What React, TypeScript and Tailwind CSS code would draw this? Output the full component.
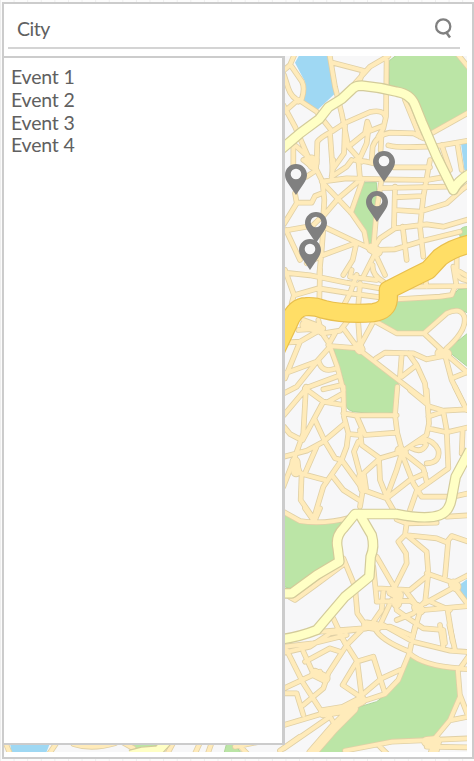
import React from "react";

type Tile = { x: number; y: number; roads: string[]; wide?: string[] };

// Street geometry, drawn at three units per pixel, one sheet per district.
const tiles: Tile[] = [
  {
    x: 280,
    y: 50,
    roads: [
      "M45 10 L30 45 L10 62",
      "M35 50 L66 95 Q76 115 65 148 L55 155",
      "M12 75 L25 115 Q35 145 60 152 L110 185 L155 242",
      "M10 188 L45 157",
      "M10 165 L45 230 L95 345",
      "M148 10 L165 110 L185 190 L205 290 L245 335",
      "M158 38 L250 62 L238 95",
      "M325 18 L270 50 L225 100",
      "M320 10 L318 200 L310 235 L295 260",
      "M188 222 L270 186 Q310 178 316 200",
      "M110 340 L112 275 Q120 262 160 242 L190 222",
      "M150 250 L158 360",
      "M195 225 L192 310 L160 355",
      "M205 290 L255 250 L262 215 L272 242 L308 228",
      "M265 240 L260 280 L235 335",
      "M275 330 L278 290 Q290 255 330 248 L400 250 L430 265",
      "M305 245 L302 300 M325 286 Q350 294 440 290",
      "M375 150 L420 260",
      "M440 258 L565 188",
      "M450 292 L565 272",
      "M485 285 L510 360",
      "M532 280 L545 360",
      "M565 52 L535 15",
      "M40 290 L40 345 M48 288 L100 335",
    ],
    wide: ["M95 330 L98 345"],
  },
  {
    x: 280,
    y: 160,
    roads: [
      "M70 0 L110 30 L130 70 L215 160 L253 215 L262 262",
      "M110 0 L108 32 M110 30 L80 50",
      "M45 100 L50 128 L95 128 L105 108 L125 100",
      "M50 130 L12 192",
      "M128 70 L133 120 L130 165 L90 205",
      "M240 60 L175 115 L130 168",
      "M125 65 L200 55 L310 58 L440 60 L500 50",
      "M160 0 L155 55 M155 50 L200 20 L215 0",
      "M235 0 L240 55",
      "M247 62 L213 158",
      "M225 0 L260 5 L280 10",
      "M340 22 L450 22 M310 84 L500 80",
      "M345 80 L342 200",
      "M304 62 L290 150 L280 265",
      "M345 112 L430 108",
      "M345 150 L420 155 L500 130 L545 90 L565 75",
      "M450 0 L430 110 L420 200 L430 290",
      "M345 205 L300 235 L280 265",
      "M345 205 L440 193 L490 200 L565 178",
      "M430 242 L540 215",
      "M368 200 L380 300",
      "M280 270 L345 268 L430 242",
      "M12 212 L80 200",
      "M18 210 L60 300",
      "M130 200 L215 240 L280 270 L315 345",
      "M130 205 L125 270 L118 340",
      "M80 310 L130 285 L225 250",
      "M228 255 L218 300 L190 345",
      "M288 275 L250 350",
      "M500 280 L535 250 M530 260 L530 330 L565 350",
    ],
    wide: ["M85 0 L100 15", "M275 265 L292 275"],
  },
  {
    x: 280,
    y: 270,
    roads: [
      "M15 0 L42 75 L35 100",
      "M15 8 L90 16 L200 38 L300 55",
      "M120 0 L118 90",
      "M45 75 L115 55 L210 70 L300 82",
      "M215 0 L210 20 L290 30",
      "M230 15 L210 70 L192 105",
      "M240 40 L235 105",
      "M278 -15 Q275 15 310 35",
      "M350 88 L480 80 L515 75 L525 50",
      "M360 50 L560 48",
      "M430 0 L440 50 M520 -10 L530 50 M525 0 Q535 30 565 32",
      "M70 150 L110 165 L150 225",
      "M55 180 L130 175 M115 150 L125 190",
      "M130 190 L180 182 L205 150",
      "M150 228 L235 235",
      "M190 175 L230 230 M235 160 L240 230 M280 155 L238 232",
      "M165 190 L145 225",
      "M288 155 L350 190 L432 190 L490 245 L565 310",
      "M432 190 L500 130 Q540 110 553 140 Q562 180 500 235 L490 250",
      "M232 235 L355 330 L440 395",
      "M288 265 L315 248 L400 250 L440 268 L490 258",
      "M365 255 L360 320",
      "M385 250 L410 285 L365 320 M410 285 L435 340 L440 390",
      "M495 255 L515 330 L550 400",
      "M515 325 L565 305",
      "M12 218 L60 215 L120 180",
      "M60 215 L15 325",
      "M150 230 L110 275 L15 310",
      "M110 275 L50 350 L12 370",
      "M150 230 L172 290 L190 360",
      "M115 270 Q125 312 168 295",
      "M75 355 L175 318",
    ],
    wide: ["M75 165 L120 178", "M235 230 L240 238", "M480 250 L500 252"],
  },
  {
    x: 280,
    y: 390,
    roads: [
      "M12 75 L75 0",
      "M78 -10 L70 130 L45 200 L10 290",
      "M12 110 L30 132 L60 148",
      "M75 -5 L130 35 L190 45",
      "M130 35 L68 150",
      "M105 90 L135 155 L165 205 L185 210",
      "M145 35 L190 10 M130 -2 L185 -15",
      "M190 -10 L192 80 L205 130 L200 170 L185 210 L130 290 L100 390",
      "M195 100 L130 155 L80 182 L12 200",
      "M110 170 L75 250",
      "M45 205 L60 250 L135 270",
      "M65 250 L62 330 L100 385",
      "M190 70 L225 76 L350 76",
      "M230 78 L255 135 L348 128 M205 132 L240 135",
      "M352 -10 L345 75 L352 130 L367 185",
      "M240 120 L245 165 L300 205 L367 185 L440 135 L447 100 L440 0",
      "M235 155 L222 185 L250 290 L240 350",
      "M185 210 L250 300 L320 325 L340 360",
      "M155 255 L190 300 L240 332",
      "M300 205 L245 255 M297 205 L300 270 L320 320",
      "M365 190 L350 240 L320 320",
      "M365 190 L400 280 L425 320 L520 320 L565 310",
      "M320 325 L390 270 L435 250",
      "M367 185 L430 235 L440 275",
      "M395 175 Q425 190 438 165 Q435 150 405 160 M430 148 Q460 150 475 180 Q482 218 440 220",
      "M390 0 L450 50 L490 62 L560 58",
      "M445 80 L490 65 L500 120 L505 235 L410 303 L390 360",
      "M445 115 L500 127 L565 112",
      "M525 -10 L560 60",
      "M548 120 L545 190",
    ],
    wide: ["M45 215 L48 245", "M245 260 L250 295", "M360 182 L370 188"],
  },
  {
    x: 280,
    y: 510,
    roads: [
      "M10 5 L60 33 Q130 45 215 22",
      "M75 -5 L100 30 M120 -5 L105 30",
      "M190 145 L225 230 L232 310 L260 350",
      "M30 262 L45 270 L100 230 L195 160",
      "M350 28 L380 40 L470 38 M500 20 L565 16",
      "M380 40 L375 75 L355 95 L378 130 L380 160 L345 230",
      "M380 75 L440 125 L445 190 L435 280",
      "M375 75 L470 85 L500 97 L515 78 L565 95",
      "M505 90 L495 200",
      "M440 190 L520 218 L565 195",
      "M290 140 L345 235 M280 170 L290 270",
      "M290 235 L390 240 L445 195",
      "M515 220 L565 285 M525 230 L435 280",
      "M290 275 L390 272 L430 300 L565 288",
      "M310 245 L305 300 L270 350",
      "M335 270 L300 345 M345 240 L350 300 L385 325 L430 355 L490 360 L495 400",
      "M350 330 L400 310 L440 270 L510 300",
      "M420 305 L395 390",
      "M502 295 L518 395",
      "M375 240 L420 300",
      "M120 365 L250 355 L330 350 L390 375",
      "M160 325 L195 400",
    ],
    wide: ["M335 245 L355 255 L350 280", "M260 345 L290 350", "M520 222 L528 230", "M410 292 L420 300"],
  },
  {
    x: 280,
    y: 630,
    roads: [
      "M12 68 L90 50 L150 10 L260 -5",
      "M20 60 L70 160 L125 245",
      "M70 65 L95 120 L130 150",
      "M12 175 L120 125",
      "M75 95 L150 55 L180 65 M12 50 L100 40 L200 15",
      "M170 0 L200 45 L232 95 L245 200",
      "M250 -5 L200 45 L145 130 L130 175 L70 225",
      "M230 95 L188 165 L240 200",
      "M230 95 L280 80 L315 190",
      "M240 200 L305 145 L360 120",
      "M12 190 L50 190 L70 255",
      "M285 -5 Q300 30 388 65",
      "M405 -10 L388 70 L355 150 L315 192 L245 215",
      "M310 -15 L400 35 L510 62 L565 66",
      "M388 70 Q430 108 540 115 L565 80",
      "M480 -15 L490 50 M508 -15 L525 60",
      "M533 115 L540 200 L510 270 L460 330",
      "M540 195 L565 260 L515 270",
      "M12 355 L150 260 L165 285 L195 250",
      "M12 285 L130 250",
      "M195 362 L335 335 L565 325",
      "M440 350 L565 352 M300 350 L320 370 M530 115 L565 118",
    ],
    wide: ["M130 248 L190 238 L245 210", "M220 235 L160 295 L95 370", "M440 335 L470 332 L460 370", "M105 130 L135 145"],
  },
  {
    x: 0,
    y: 730,
    roads: [
      "M15 35 L32 75 M145 75 L170 38 M220 42 Q275 60 345 40",
      "M500 75 L520 38 M583 75 L600 38 M622 75 L635 38",
      "M365 35 L400 55 M705 50 L780 35 M710 38 L745 75 M840 62 L900 20",
    ],
  },
];

const greens = [
  { x: 280, y: 50, d: "M328 32 L350 15 L535 15 L565 50 L565 185 L450 250 L420 180 L395 130 L328 112Z" },
  { x: 280, y: 160, d: "M250 68 L290 68 L288 150 L278 262 L258 262 L252 215 L218 165Z M538 212 Q548 198 565 200 L565 235 L540 230Z" },
  { x: 280, y: 270, d: "M290 155 L350 92 L515 82 L535 58 L565 55 L565 130 L540 118 L510 118 L430 190 L350 190Z M160 235 L230 235 L355 335 L345 428 Q300 435 220 425 Q198 420 197 400 L190 330Z M565 188 L500 240 L565 292Z" },
  { x: 280, y: 510, d: "M12 8 L60 35 L190 38 L165 80 L165 130 L180 150 L100 195 L30 235 L12 230Z M85 230 L110 210 L100 235Z" },
  { x: 280, y: 630, d: "M388 72 Q430 110 530 122 L535 200 L510 260 L460 325 L335 332 L200 358 L180 370 L115 370 L120 345 L240 230 L290 215 Q340 180 360 140Z" },
  { x: 0, y: 730, d: "M380 40 L475 40 L450 58 L395 55Z M680 40 L700 40 L725 70 L672 70Z" },
];

const waters = [
  { x: 280, y: 50, d: "M58 15 L148 15 L160 80 L166 130 L110 182 L68 150 L78 120 L75 95 L45 38Z M543 280 L565 276 L565 365 L553 360Z" },
  { x: 280, y: 510, d: "M538 225 L565 205 L565 277 L545 260Z" },
  { x: 0, y: 730, d: "M30 40 L150 40 L138 70 L35 70Z" },
];

const yellowRoads = [
  { x: 280, y: 50, d: "M5 297 L60 250 L118 207 L145 172 L185 147 L220 114 Q228 107 245 107 Q300 112 350 125 Q392 132 405 165 L425 215 L470 320 L520 420 Q535 390 575 368" },
  { x: 280, y: 510, d: "M5 250 L35 250 L110 195 L178 155 L173 115 Q165 80 190 55 L225 12 L350 12 Q440 30 480 15 Q508 5 515 -35 L527 -100 L570 -180" },
  { x: 280, y: 510, d: "M240 15 L275 75 Q285 110 272 140 L268 200 L195 260 L110 360 Q60 380 5 388" },
  { x: 0, y: 730, d: "M390 75 L425 66 L475 62 L500 35" },
];

const highway =
  "M-15 245 L25 160 Q45 110 78 110 Q105 108 130 118 Q200 135 280 128 Q322 122 325 88 L325 60 L400 22 L445 0 L480 -38 Q520 -68 580 -80";

const pins = [
  { left: 285, top: 164 },
  { left: 373, top: 151 },
  { left: 366, top: 191 },
  { left: 305, top: 212 },
  { left: 298.5, top: 238.5 },
];

function place(p: { x: number; y: number }) {
  return `translate(${p.x} ${p.y}) scale(0.33333)`;
}

function Streets({ color, width, wideWidth }: { color: string; width: number; wideWidth: number }) {
  return (
    <g fill="none" stroke={color} strokeLinejoin="round" strokeLinecap="round">
      {tiles.map((t, i) => (
        <g key={i} transform={place(t)}>
          <path d={t.roads.join(" ")} strokeWidth={width} />
          <path d={(t.wide ?? []).join(" ")} strokeWidth={wideWidth} />
        </g>
      ))}
    </g>
  );
}

function CityMap() {
  return (
    <svg className="block h-[696px] w-[463px]" viewBox="4 56 463 696" aria-hidden="true">
      <rect x="4" y="56" width="463" height="696" fill="#f7f7f8" />
      {greens.map((g, i) => (
        <path key={i} transform={place(g)} d={g.d} fill="#bbe5a6" stroke="#aed59a" strokeWidth="3" />
      ))}
      {waters.map((w, i) => (
        <path key={i} transform={place(w)} d={w.d} fill="#9fd8f3" />
      ))}
      <Streets color="#e0d0a6" width={17} wideWidth={33} />
      <Streets color="#ffebba" width={12} wideWidth={28} />
      <g fill="none" strokeLinejoin="round">
        {yellowRoads.map((r, i) => (
          <path key={i} transform={place(r)} d={r.d} stroke="#d3cb9a" strokeWidth="32" />
        ))}
        {yellowRoads.map((r, i) => (
          <path key={i} transform={place(r)} d={r.d} stroke="#ffffc5" strokeWidth="25" />
        ))}
        <g transform="translate(280 270) scale(0.33333)">
          <path d={highway} stroke="#e8bf4d" strokeWidth="58" />
          <path d={highway} stroke="#ffde66" strokeWidth="51" />
        </g>
      </g>
    </svg>
  );
}

function Pin({ left, top }: { left: number; top: number }) {
  return (
    <svg className="absolute h-[31px] w-[22px]" style={{ left, top }} viewBox="0 0 22 31">
      <path
        fill="#808080"
        fillRule="evenodd"
        d="M11 0C4.9 0 0 4.9 0 11c0 3.1 1.5 5.8 3.2 8.5L11 31l7.8-11.5C20.500 16.800 22 14.100 22 11 22 4.900 17.100 0 11 0Zm0 4.700a5.300 5.300 0 1 1 0 10.600 5.300 5.300 0 0 1 0-10.600Z"
      />
    </svg>
  );
}

const events = ["Event 1", "Event 2", "Event 3", "Event 4"];

export default function App() {
  return (
    <div className="relative h-[761px] w-[474px] overflow-hidden bg-[#fcfcfc] bg-[linear-gradient(90deg,#eeeeee_1px,transparent_1px)] bg-[length:13.6px_13.6px] pt-[2px] pl-[2px] font-['Lato',sans-serif] text-[#606060]">
      <main className="flex h-[757px] w-[472px] flex-col border-2 border-[#cccccc] bg-white">
        <header className="ml-1 flex h-[45px] w-[452px] items-center justify-between border-b-2 border-[#d4d4d4] pr-[7px] pl-[9px]">
          <span className="pt-[7px] text-[19.5px] leading-6 tracking-[-0.5px]">City</span>
          <svg className="mt-[5.5px] h-[22px] w-[20px]" viewBox="0 0 20 22" fill="none" stroke="#808080">
            <circle cx="10.200" cy="9.400" r="7.100" strokeWidth="2.300" />
            <path d="M12.800 14.800 L17 20.500" strokeWidth="2.500" />
          </svg>
        </header>
        <div className="mt-[7px]">
          <CityMap />
        </div>
      </main>
      <aside className="absolute top-[56px] left-[2px] h-[689px] w-[283px] border-2 border-r-3 border-[#cccccc] bg-white pt-[8px] pl-[7px]">
        <ul className="text-[19.5px] leading-[22.8px] tracking-[-0.2px]">
          {events.map((event) => (
            <li key={event}>{event}</li>
          ))}
        </ul>
      </aside>
      {pins.map((pin) => (
        <Pin key={`${pin.left}-${pin.top}`} left={pin.left} top={pin.top} />
      ))}
    </div>
  );
}
